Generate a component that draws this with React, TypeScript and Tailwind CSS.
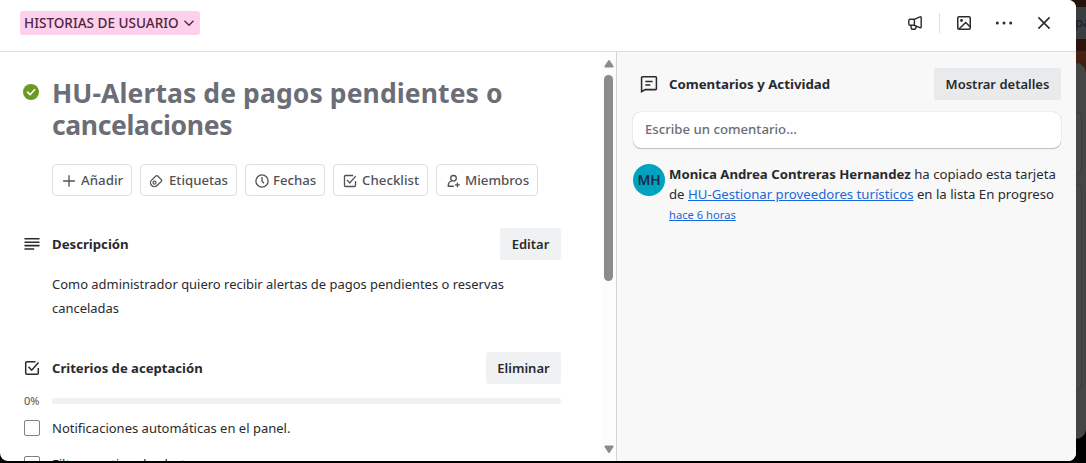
import type { ReactNode } from "react";

type IconProps = { className?: string; children: ReactNode };

function Icon({ className = "", children }: IconProps) {
  return (
    <svg
      viewBox="0 0 16 16"
      fill="none"
      stroke="currentColor"
      strokeWidth="1.5"
      className={"size-4 shrink-0 " + className}
    >
      {children}
    </svg>
  );
}

const Chevron = () => (
  <Icon className="!size-3">
    <path d="M2 5l6 6 6-6" strokeWidth="1.7" />
  </Icon>
);

const Megaphone = () => (
  <Icon>
    <path
      d="M7.4 4.3l5.5-2.5a.9.9 0 0 1 1.3.8v9.3a.9.9 0 0 1-1.3.8l-5.5-2.4zM7.4 4.3H3a1.2 1.2 0 0 0-1.2 1.2v3.6A1.2 1.2 0 0 0 3 10.3h4.4M4.1 10.3v2.4a1.5 1.5 0 0 0 1.5 1.5h1.8a1.5 1.5 0 0 0 1.5-1.5v-1.6"
      strokeWidth="1.4"
      strokeLinejoin="round"
    />
  </Icon>
);

const Picture = () => (
  <Icon>
    <rect x="1.75" y="1.75" width="12.5" height="12.5" rx="1.3" />
    <path d="M3.2 13.8l6.5-6.3 4.3 4.2" />
    <circle cx="5.5" cy="5.5" r="1.4" fill="currentColor" stroke="none" />
  </Icon>
);

const Dots = () => (
  <svg viewBox="0 0 20 16" fill="currentColor" className="h-4 w-5 shrink-0">
    <circle cx="3.3" cy="8" r="1.5" />
    <circle cx="10" cy="8" r="1.5" />
    <circle cx="16.7" cy="8" r="1.5" />
  </svg>
);

const Close = () => (
  <Icon>
    <path d="M2.4 2.4l11.2 11.2M13.6 2.4L2.4 13.6" />
  </Icon>
);

const Plus = () => (
  <Icon className="!size-3.5">
    <path d="M8 1.3v13.4M1.3 8h13.4" />
  </Icon>
);

const Tag = () => (
  <Icon className="!size-3.5">
    <path
      d="M3 7l4.9-4.8a1.4 1.4 0 0 1 2 0l4.2 4.2a1.4 1.4 0 0 1 0 2l-4.9 4.8A4.4 4.4 0 0 1 3 13.2 4.4 4.4 0 0 1 3 7z"
      strokeWidth="1.5"
    />
    <circle cx="6.3" cy="9.9" r="1.7" strokeWidth="1.4" />
  </Icon>
);

const Clock = () => (
  <Icon className="!size-3.5">
    <circle cx="8" cy="8" r="7" />
    <path d="M8 3.5V8l2.2 2.8" />
  </Icon>
);

const CheckSquare = ({ className = "" }: { className?: string }) => (
  <Icon className={className}>
    <path d="M14.3 8v5a1.3 1.3 0 0 1-1.3 1.3H3A1.3 1.3 0 0 1 1.7 13V3A1.3 1.3 0 0 1 3 1.7h8.5" />
    <path d="M4.5 6.7l3.2 3.5 6.8-7.7" />
  </Icon>
);

const MemberAdd = () => (
  <Icon className="!size-3.5">
    <circle cx="8.6" cy="4.9" r="3.2" />
    <path d="M9 14H2.6v-1.5c0-2.2 1.5-3.8 3.8-4.8M13 9.6v5.6M10.2 12.4h5.6" />
  </Icon>
);

const Comment = () => (
  <Icon className="!size-[18px]">
    <path d="M2.2 1.5h11.6a.8.8 0 0 1 .8.8v9.9a.8.8 0 0 1-.8.8H4.6l-3.2 1.8V2.3a.8.8 0 0 1 .8-.8z" strokeWidth="1.35" />
    <path d="M4.8 5.8h6.4M4.8 8.8h4.4" strokeWidth="1.3" />
  </Icon>
);

const Lines = () => (
  <svg viewBox="0 0 16 12" fill="currentColor" className="h-3 w-4 shrink-0">
    <path d="M.5 0h15v1.6H.5zM.5 3.4h15V5H.5zM.5 6.8h15v1.6H.5zM.5 10.2h9.7v1.6H.5z" />
  </svg>
);

const Done = () => (
  <svg viewBox="0 0 16 16" className="size-4 shrink-0">
    <circle cx="8" cy="8" r="8" fill="#6a9a23" />
    <path d="M4.5 8.2l2.6 2.5 4.4-5" fill="none" stroke="#fff" strokeWidth="1.6" strokeLinecap="round" />
  </svg>
);

function Action({ icon, size, children }: { icon: ReactNode; size: string; children: ReactNode }) {
  return (
    <button
      className={
        "flex h-8 items-center rounded-[4px] border border-[#dddee1] pt-px font-medium text-[#505258] " + size
      }
    >
      {icon}
      {children}
    </button>
  );
}

function Header() {
  return (
    <header className="flex h-[52px] shrink-0 items-start justify-between border-b border-[#dddee1] bg-white pr-6 pl-5">
      <button className="mt-[11px] flex h-6 w-[180px] items-center gap-1 rounded-[3px] bg-[#fdd0ec] pl-1 text-[13.55px] font-medium text-[#50253f]">
        HISTORIAS DE USUARIO
        <Chevron />
      </button>
      <div className="mt-[13px] flex h-5 items-center text-[#292a2e]">
        <Megaphone />
        <span className="mr-4 ml-4 h-5 w-px bg-[#dddee1]" />
        <Picture />
        <span className="mr-[22px] ml-[22px] flex">
          <Dots />
        </span>
        <Close />
      </div>
    </header>
  );
}

function Scrollbar() {
  return (
    <div className="flex w-[15px] shrink-0 flex-col items-center bg-[#fcfcfc] pt-2 pb-2">
      <svg viewBox="0 0 10 8" className="h-2 w-2.5 shrink-0" fill="#8b8b8b">
        <path d="M4.2.6a1 1 0 0 1 1.6 0L9.4 6a1 1 0 0 1-.8 1.6H1.4A1 1 0 0 1 .6 6z" />
      </svg>
      <div className="mt-[7px] h-[206px] w-[9px] shrink-0 rounded-full bg-[#8b8b8b]" />
      <svg viewBox="0 0 10 8" className="mt-auto h-2 w-2.5 shrink-0" fill="#8b8b8b">
        <path d="M4.2 7.4a1 1 0 0 0 1.6 0L9.4 2A1 1 0 0 0 8.6.4H1.4A1 1 0 0 0 .6 2z" />
      </svg>
    </div>
  );
}

function CheckItem({ children }: { children: ReactNode }) {
  return (
    <div className="flex h-9 items-center text-[13px] whitespace-nowrap">
      <span className="mr-3 size-4 shrink-0 rounded-[2px] border border-[#7d818a] bg-white" />
      <span className="pt-0.5">{children}</span>
    </div>
  );
}

function CardDetails() {
  return (
    <main className="min-w-0 flex-1 overflow-hidden pr-10 pl-6">
      <div className="mt-[25px] flex">
        <span className="mt-[7px] -ml-px mr-[13px]">
          <Done />
        </span>
        <h1 className="text-[26.5px] leading-8 font-bold whitespace-nowrap text-[#6b6e76]">
          <span className="block tracking-[0.1px]">HU-Alertas de pagos pendientes o</span>
          <span className="block tracking-[-0.34px]">cancelaciones</span>
        </h1>
      </div>

      <div className="mt-[23px] ml-7 flex gap-2 whitespace-nowrap">
        <Action icon={<Plus />} size="w-20 gap-[5px] pl-[9px] text-[13.3px]">Añadir</Action>
        <Action icon={<Tag />} size="w-[97px] gap-1.5 pl-[8px] text-[13.2px]">Etiquetas</Action>
        <Action icon={<Clock />} size="w-20 gap-1 pl-[9px] text-[13.2px]">Fechas</Action>
        <Action icon={<CheckSquare className="!size-3.5" />} size="w-[95px] gap-[5px] pl-[9px] text-[13.3px]">Checklist</Action>
        <Action icon={<MemberAdd />} size="w-[102px] gap-[5px] pl-[9px] text-[13.3px]">Miembros</Action>
      </div>

      <section className="mt-8">
        <div className="flex items-center gap-3">
          <Lines />
          <h2 className="flex-1 pt-0.5 text-[13.2px] font-bold">Descripción</h2>
          <button className="h-8 w-[61px] rounded-[3px] bg-[#f0f1f2] pt-0.5 text-[13px] font-semibold">Editar</button>
        </div>
        <p className="mt-3 ml-7 text-[12.96px] leading-6 whitespace-nowrap">
          Como administrador quiero recibir alertas de pagos pendientes o reservas
          <br />
          canceladas
        </p>
      </section>

      <section className="mt-8">
        <div className="flex items-center gap-3">
          <CheckSquare />
          <h2 className="flex-1 pt-0.5 text-[13.1px] font-bold">Criterios de aceptación</h2>
          <button className="h-8 w-[75px] rounded-[3px] bg-[#f0f1f2] pt-0.5 text-[13px] font-semibold">Eliminar</button>
        </div>
        <div className="mt-3 flex h-[10px] items-center">
          <span className="w-7 text-[11px] leading-[10px] text-[#505258]">0%</span>
          <div className="h-1.5 flex-1 rounded-full bg-[#f0f1f2]" />
        </div>
        <div className="mt-1">
          <CheckItem>Notificaciones automáticas en el panel.</CheckItem>
          <CheckItem>Filtro por tipo de alerta.</CheckItem>
        </div>
      </section>
    </main>
  );
}

function Activity() {
  return (
    <aside className="w-[460px] shrink-0 border-l border-[#d2d3d5] bg-[#f8f8f8] pr-[15px] pl-4">
      <div className="mt-4 flex items-center pl-[7px]">
        <Comment />
        <h2 className="ml-[11px] flex-1 pt-0.5 text-[13.25px] font-bold">Comentarios y Actividad</h2>
        <button className="h-8 w-[127px] rounded-[3px] bg-[#e9eaeb] pt-0.5 text-[13px] font-semibold">Mostrar detalles</button>
      </div>
      <div className="mt-3 flex h-9 items-center rounded-lg bg-white pl-3 text-[13.2px] font-medium text-[#6b6e76] shadow-[0_1px_1px_#1e1f2140,0_0_1px_#1e1f214f]">
        Escribe un comentario...
      </div>
      <div className="mt-4 flex gap-1">
        <div className="flex size-8 shrink-0 items-center justify-center rounded-full bg-[#00a3bf] text-[13.8px] font-semibold text-[#172b4d]">
          MH
        </div>
        <div className="text-[13.2px] leading-5 whitespace-nowrap">
          <div>
            <b>Monica Andrea Contreras Hernandez</b> ha copiado esta tarjeta
          </div>
          <div>
            de <a className="text-[#1868db] underline">HU-Gestionar proveedores turísticos</a> en la lista En progreso
          </div>
          <a className="block pt-px text-[11.2px] text-[#1868db] underline">hace 6 horas</a>
        </div>
      </div>
    </aside>
  );
}

function Board() {
  return (
    <div className="absolute inset-y-0 right-0 flex w-5 flex-col overflow-hidden bg-black">
      <div className="h-[7px] shrink-0 bg-[#25130a]" />
      <div className="flex h-8 shrink-0 items-center bg-[#3b3e41] pl-[9px] text-[13px] text-[#151b29]">pa</div>
      <div className="h-3 shrink-0 bg-[#2b150a]" />
      <div className="h-[388px] shrink-0 bg-gradient-to-b from-[#4a2312] from-0% via-[#3a1c0f] via-5% to-black to-20%">
        <div className="mt-3 flex h-[376px] flex-col gap-2 rounded-[10px] bg-[#454545] pt-12 pr-1">
          <div className="h-16 rounded-lg border border-[#3b3b3b] bg-[#484848]" />
          <div className="h-[208px] rounded-lg border border-[#3b3b3b] bg-[#474747]" />
        </div>
      </div>
    </div>
  );
}

export default function App() {
  return (
    <div className="relative h-[463px] w-[1086px] overflow-hidden bg-black font-['Noto_Sans',sans-serif] text-[#292a2e]">
      <Board />
      <div className="relative flex h-[461px] w-[1076px] flex-col overflow-hidden rounded-tr-lg rounded-b-lg bg-white">
        <Header />
        <div className="flex min-h-0 flex-1">
          <CardDetails />
          <Scrollbar />
          <Activity />
        </div>
      </div>
    </div>
  );
}
